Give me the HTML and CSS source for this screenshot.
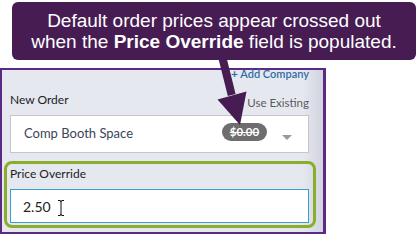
FILE: index.html
```html
<!DOCTYPE html>
<html>
<head>
<meta charset="utf-8">
<link rel="stylesheet" href="styles.css">
</head>
<body>
<div class="stage">
  <div class="callout">
    <div>Default order prices appear crossed out</div>
    <div>when the <b>Price Override</b> field is populated.</div>
  </div>
  <div class="frame">
    <div class="toprow"><span class="plus">+</span> Add Company</div>
    <div class="labelrow">
      <span class="label">New Order</span>
      <span class="existing"><span class="checkbox"></span>Use Existing</span>
    </div>
    <div class="select">
      <span class="seltext">Comp Booth Space</span>
      <span class="pill">$0.00</span>
      <span class="caret"></span>
    </div>
    <div class="override">
      <div class="label olabel">Price Override</div>
      <div class="input">
        <span>2.50</span>
        <svg class="ibeam" width="8" height="16" viewBox="0 0 8 16">
          <path d="M1 0.5 H3 Q4 0.5 4 2 V14 Q4 15.5 5 15.5 H7 M4 2 Q4 0.5 5 0.5 H7 M1 15.5 H3 Q4 15.5 4 14" fill="none" stroke="#111" stroke-width="1"/>
        </svg>
      </div>
    </div>
  </div>
  <svg class="arrow" width="419" height="234" viewBox="0 0 419 234">
    <polygon points="218.1,57 225.9,55 235.6,94 227.8,96" fill="#461c52"/>
    <polygon points="217.5,99.5 246.5,91.5 240,125" fill="#461c52"/>
  </svg>
</div>
</body>
</html>
```

FILE: styles.css
```css
html, body {
  margin: 0;
  padding: 0;
  background: #ffffff;
}
.stage {
  position: relative;
  width: 419px;
  height: 234px;
  overflow: hidden;
  font-family: Lato, "Open Sans", sans-serif;
}
.callout {
  margin: 2px 0 0 12px;
  width: 404px;
  box-sizing: border-box;
  padding: 8px 0;
  background: #461c52;
  border-radius: 6px;
  color: #ffffff;
  font-family: "Liberation Sans", Arial, sans-serif;
  font-size: 19px;
  line-height: 21px;
  text-align: center;
}
.callout b {
  font-weight: bold;
}
.frame {
  margin-top: 8px;
  width: 326px;
  height: 166px;
  box-sizing: border-box;
  border: 2px solid #5a2a84;
  border-bottom: 2px solid #5a2a84;
  border-right-width: 3px;
  background: linear-gradient(to right, #e6e8f0 0, #e6e8f0 calc(100% - 20px), #d2d4de 100%);
  padding: 0 14px 0 8px;
  display: flex;
  flex-direction: column;
}
.toprow {
  margin-top: -3px;
  height: 14px;
  line-height: 14px;
  font-size: 11px;
  color: #2f6ca6;
  text-align: right;
  font-weight: 600;
}
.plus {
  font-weight: 700;
  font-size: 12px;
}
.labelrow {
  height: 34px;
  box-sizing: border-box;
  padding-bottom: 7px;
  display: flex;
  align-items: flex-end;
  justify-content: space-between;
}
.label {
  font-size: 12px;
  line-height: 16px;
  color: #222222;
}
.existing {
  display: flex;
  align-items: center;
  font-size: 11.5px;
  line-height: 16px;
  color: #5a5a5a;
  margin-bottom: -3px;
}
.checkbox {
  width: 9px;
  height: 10px;
  border: 1px solid #8a8a8a;
  background: #ffffff;
  margin-right: 5px;
  box-sizing: border-box;
}
.select {
  height: 38px;
  box-sizing: border-box;
  border: 1px solid #c6c6c8;
  background: #ffffff;
  display: flex;
  align-items: center;
  padding: 0 16px 2px 13px;
}
.seltext {
  flex: 1;
  font-size: 13px;
  color: #3b4656;
}
.pill {
  width: 45px;
  height: 18px;
  margin-top: -3px;
  border-radius: 9px;
  background: #6e6e6e;
  color: #ffffff;
  font-size: 11.5px;
  font-weight: 700;
  line-height: 18px;
  text-align: center;
  text-decoration: line-through;
}
.caret {
  width: 0;
  height: 0;
  margin-left: 15px;
  margin-top: 8px;
  border-left: 5px solid transparent;
  border-right: 5px solid transparent;
  border-top: 5px solid #9a9a9a;
}
.override {
  margin: 8px -7px 0 -6px;
  height: 67px;
  box-sizing: border-box;
  border: 3px solid #8aad2c;
  border-radius: 8px;
  padding: 2px 4px 2px 3px;
}
.olabel {
  margin-bottom: 7px;
}
.input {
  position: relative;
  height: 34px;
  box-sizing: border-box;
  border: 1px solid #3a9fd0;
  background: #ffffff;
  display: flex;
  align-items: center;
  padding-left: 12px;
  font-size: 14px;
  color: #222222;
}
.ibeam {
  position: absolute;
  left: 46px;
  top: 10px;
}
.arrow {
  position: absolute;
  left: 0;
  top: 0;
  pointer-events: none;
}
```
